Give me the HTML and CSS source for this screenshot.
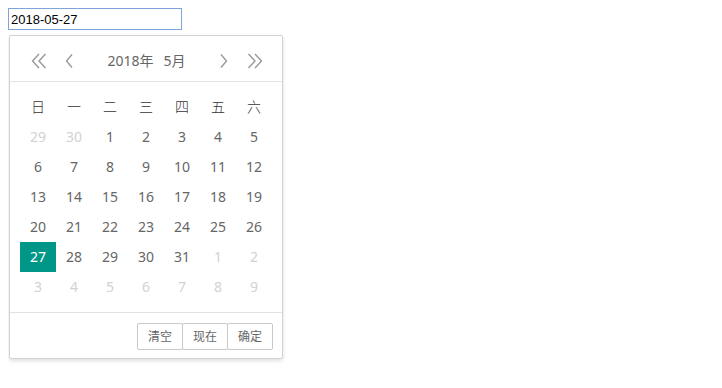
FILE: index.html
```html
<html>
<head>
	<title>Date picker</title>
	<link rel="stylesheet" href="styles.css">
</head>
<body>

<input class="date-input" type="text" value="2018-05-27" autofocus>

<div class="laydate">
	<div class="laydate-header">
		<svg class="nav prev-y" width="16" height="16" viewBox="0 0 16 16"><path d="M8 1 L1.5 8 L8 15 M14.5 1 L8 8 L14.5 15"/></svg>
		<svg class="nav" width="8" height="16" viewBox="0 0 8 16"><path d="M7 1.5 L1.5 8 L7 14.5"/></svg>
		<div class="laydate-ym"><span>2018年</span><span>5月</span></div>
		<svg class="nav next-m" width="8" height="16" viewBox="0 0 8 16"><path d="M1 1.5 L6.5 8 L1 14.5"/></svg>
		<svg class="nav" width="16" height="16" viewBox="0 0 16 16"><path d="M1.5 1 L8 8 L1.5 15 M8 1 L14.5 8 L8 15"/></svg>
	</div>

	<div class="laydate-content">
		<table>
			<thead>
				<tr><th>日</th><th>一</th><th>二</th><th>三</th><th>四</th><th>五</th><th>六</th></tr>
			</thead>
			<tbody>
				<tr><td class="other">29</td><td class="other">30</td><td>1</td><td>2</td><td>3</td><td>4</td><td>5</td></tr>
				<tr><td>6</td><td>7</td><td>8</td><td>9</td><td>10</td><td>11</td><td>12</td></tr>
				<tr><td>13</td><td>14</td><td>15</td><td>16</td><td>17</td><td>18</td><td>19</td></tr>
				<tr><td>20</td><td>21</td><td>22</td><td>23</td><td>24</td><td>25</td><td>26</td></tr>
				<tr><td class="this">27</td><td>28</td><td>29</td><td>30</td><td>31</td><td class="other">1</td><td class="other">2</td></tr>
				<tr><td class="other">3</td><td class="other">4</td><td class="other">5</td><td class="other">6</td><td class="other">7</td><td class="other">8</td><td class="other">9</td></tr>
			</tbody>
		</table>
	</div>

	<div class="laydate-footer">
		<span class="btn">清空</span><span class="btn">现在</span><span class="btn">确定</span>
	</div>
</div>

</body>
</html>
```

FILE: styles.css
```css
body {
	margin: 8px;
	background: #fff;
	font-family: "Liberation Sans", Arial, sans-serif;
}

.date-input {
	display: block;
	box-sizing: border-box;
	width: 174px;
	height: 22px;
	margin: 0;
	padding: 1px 2px;
	border: 1px solid #7ea4dc;
	outline: none;
	font-family: "Liberation Sans", Arial, sans-serif;
	font-size: 13px;
	color: #000;
	caret-color: #000;
}

.laydate {
	width: 272px;
	margin: 5px 0 0 1px;
	border: 1px solid #d2d2d2;
	border-radius: 2px;
	box-shadow: 0 2px 4px rgba(0, 0, 0, .12);
	background: #fff;
	color: #666;
	font-family: "Noto Sans", "Noto Sans CJK SC", sans-serif;
	font-size: 14px;
}

.laydate-header {
	display: flex;
	align-items: center;
	height: 30px;
	padding: 10px 19px 5px 21px;
	border-bottom: 1px solid #e2e2e2;
}

.nav {
	flex: none;
	fill: none;
	stroke: #999;
	stroke-width: 1.4;
}

.nav.prev-y {
	margin-right: 18px;
}

.nav.next-m {
	margin-right: 19px;
}

.laydate-ym {
	flex: 1;
	text-align: center;
	line-height: 30px;
}

.laydate-ym span {
	margin: 0 5px;
}

.laydate-content {
	padding: 10px;
}

.laydate-content table {
	border-collapse: collapse;
	border-spacing: 0;
	font-family: "Noto Sans", "Noto Sans CJK SC", sans-serif;
	font-size: 14px;
	color: #666;
}

.laydate-content th,
.laydate-content td {
	width: 36px;
	height: 30px;
	padding: 0 0 2px;
	text-align: center;
}

.laydate-content th {
	font-weight: 300;
	color: #333;
}

.laydate-content td.other {
	color: #d2d2d2;
}

.laydate-content td.this {
	background: #009688;
	color: #fff;
}

.laydate-footer {
	display: flex;
	justify-content: flex-end;
	padding: 10px 9px 8px 10px;
	border-top: 1px solid #e2e2e2;
}

.btn {
	height: 25px;
	line-height: 25px;
	padding: 0 10px;
	margin-left: -1px;
	border: 1px solid #c9c9c9;
	border-radius: 2px;
	background: #fff;
	font-size: 12px;
	color: #666;
	white-space: nowrap;
}
```
